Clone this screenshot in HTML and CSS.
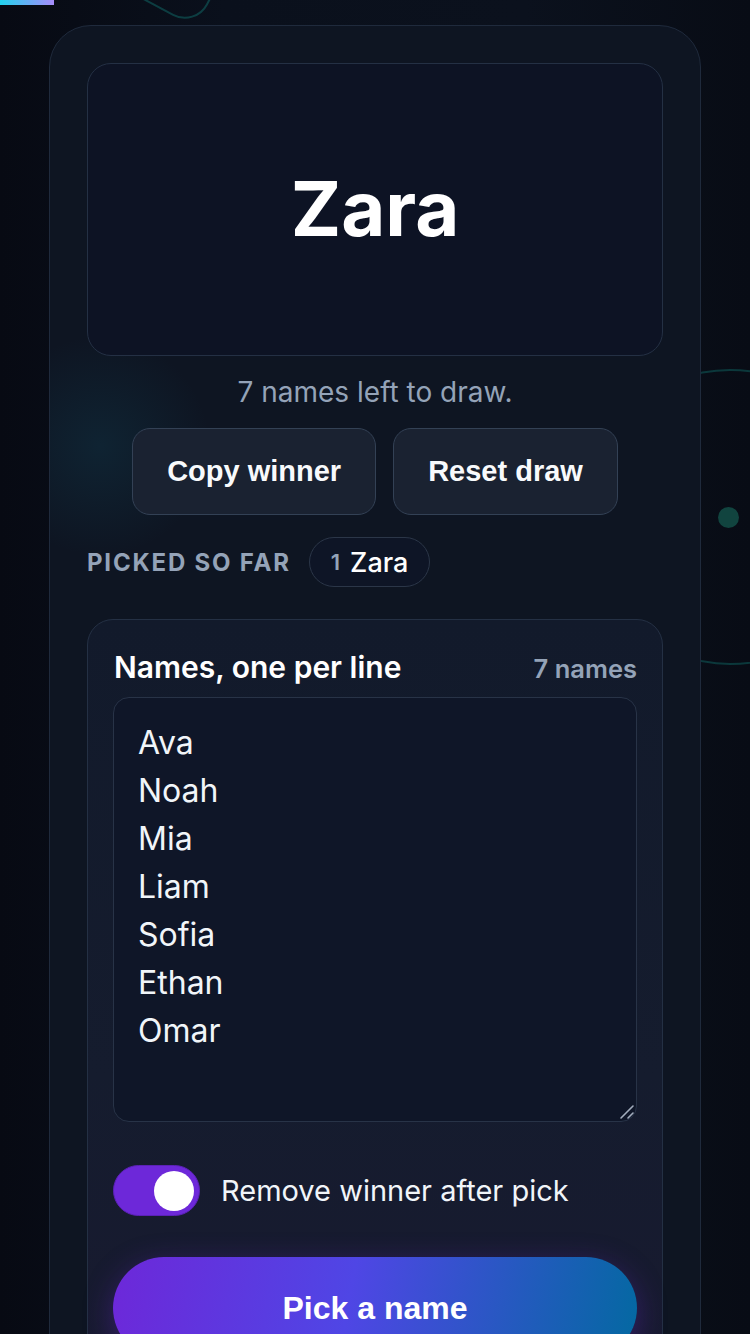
FILE: index.html
```html
<!DOCTYPE html>
<html lang="en">
<head>
<meta charset="utf-8">
<title>Name Picker</title>
<link rel="stylesheet" href="styles.css">
</head>
<body>
<div class="progress"></div>
<div class="deco deco-top"></div>
<div class="deco deco-right"></div>
<div class="deco-dot"></div>
<main class="card">
  <section class="winner-box">
    <div class="winner">Zara</div>
  </section>
  <p class="remaining">7 names left to draw.</p>
  <div class="actions">
    <button class="btn">Copy winner</button>
    <button class="btn">Reset draw</button>
  </div>
  <div class="picked">
    <span class="picked-label">Picked so far</span>
    <span class="chip"><span class="chip-num">1</span><span class="chip-name">Zara</span></span>
  </div>
  <section class="panel">
    <div class="panel-head">
      <span class="panel-title">Names, one per line</span>
      <span class="panel-count">7 names</span>
    </div>
    <div class="names-wrap">
      <textarea class="names" spellcheck="false">Ava
Noah
Mia
Liam
Sofia
Ethan
Omar</textarea>
      <svg class="grip" width="16" height="16" viewBox="0 0 16 16" aria-hidden="true">
        <path d="M2 14 L14 2 M9 14 L14 9" stroke="#a3adbd" stroke-width="1.6" stroke-linecap="round" fill="none"/>
      </svg>
    </div>
    <label class="toggle-row">
      <span class="toggle"><span class="knob"></span></span>
      <span class="toggle-text">Remove winner after pick</span>
    </label>
    <button class="pick">Pick a name</button>
  </section>
</main>
</body>
</html>
```

FILE: styles.css
```css
* { box-sizing: border-box; }
html, body { margin: 0; padding: 0; }
body {
  min-height: 1334px;
  font-family: Inter, "Noto Sans", sans-serif;
  color: #f8fafc;
  background: linear-gradient(90deg, #070a13 0%, #0a101c 30%, #0b111d 70%, #080c15 100%);
  padding: 25px 49px 0;
  overflow: hidden;
  position: relative;
}
.progress {
  position: absolute; left: 0; top: 0;
  width: 54px; height: 5px;
  background: linear-gradient(90deg, #22d3ee, #a78bfa);
  z-index: 3;
}
.deco {
  position: absolute;
  border: 2px solid rgba(20, 150, 140, 0.35);
}
.deco-top {
  width: 90px; height: 90px;
  left: 132px; top: -78px;
  border-radius: 26px;
  transform: rotate(28deg);
}
.deco-right {
  left: 582px; top: 369px;
  width: 296px; height: 296px;
  border-radius: 50%;
  border-color: rgba(20, 150, 140, 0.32);
}
.deco-dot {
  position: absolute;
  left: 718px; top: 507px;
  width: 21px; height: 21px;
  border-radius: 50%;
  background: #11443f;
}
.card {
  position: relative;
  z-index: 1;
  width: 652px;
  border: 1.5px solid #1f2a3c;
  border-radius: 42px;
  background:
    radial-gradient(circle at 50px 420px, rgba(20, 110, 135, 0.16) 0, rgba(20,110,135,0) 110px),
    #0e1522;
  padding: 37px 37px 60px;
  min-height: 1400px;
  display: flex;
  flex-direction: column;
  align-items: stretch;
}
.winner-box {
  height: 293px;
  border: 1.5px solid #243044;
  border-radius: 24px;
  background: #0d1324;
  display: flex;
  align-items: center;
  justify-content: center;
}
.winner {
  font-size: 76px;
  font-weight: 700;
  color: #ffffff;
  margin-top: -4px;
}
.remaining {
  margin: 17px 0 0;
  text-align: center;
  font-size: 28px;
  line-height: 39px;
  color: #94a3b8;
}
.actions {
  margin-top: 16px;
  display: flex;
  justify-content: center;
  gap: 17px;
}
.btn {
  height: 87px;
  padding: 0 34px;
  font-family: "Liberation Sans", Arial, sans-serif;
  font-weight: 700;
  font-size: 29px;
  color: #f8fafc;
  background: #1a2231;
  border: 1.5px solid #334155;
  border-radius: 18px;
}
.picked {
  margin-top: 22px;
  display: flex;
  align-items: center;
  gap: 18px;
}
.picked-label {
  text-transform: uppercase;
  font-size: 24px;
  font-weight: 700;
  letter-spacing: 0.075em;
  color: #94a3b8;
}
.chip {
  height: 50px;
  padding: 0 21px;
  border: 1.5px solid #2b3648;
  border-radius: 25px;
  background: #0e1526;
  display: flex;
  align-items: center;
  gap: 10px;
}
.chip-num { font-size: 22px; font-weight: 600; color: #94a3b8; }
.chip-name { font-size: 27px; font-weight: 500; color: #ffffff; }
.panel {
  margin-top: 32px;
  border: 1.5px solid #243044;
  border-radius: 26px;
  background: linear-gradient(180deg, #121a2b 0%, #151c2e 60%, #181a30 100%);
  padding: 28px 25px 0;
  display: flex;
  flex-direction: column;
  height: 760px;
}
.panel-head {
  display: flex;
  justify-content: space-between;
  align-items: baseline;
  padding: 0 0 0 1px;
}
.panel-title { font-size: 30px; font-weight: 600; line-height: 38px; color: #ffffff; }
.panel-count { font-size: 25.5px; font-weight: 600; color: #94a3b8; }
.names-wrap {
  position: relative;
  margin-top: 11px;
}
.names {
  display: block;
  height: 425px;
  width: 100%;
  resize: none;
  font-family: Inter, "Noto Sans", sans-serif;
  font-size: 32px;
  line-height: 48px;
  color: #f1f5f9;
  background: #0f1628;
  border: 1.5px solid #283347;
  border-radius: 16px;
  padding: 21px 24px;
  outline: none;
  overflow: hidden;
}
.grip {
  position: absolute;
  right: 2px;
  bottom: 2px;
}
.toggle-row {
  margin-top: 43px;
  display: flex;
  align-items: center;
  gap: 21px;
}
.toggle {
  width: 87px; height: 51px;
  border-radius: 26px;
  background: #6d28d9;
  border: 1.5px solid #5b21b6;
  display: flex;
  align-items: center;
  justify-content: flex-end;
  padding-right: 5px;
}
.knob {
  width: 40px; height: 40px;
  border-radius: 50%;
  background: #ffffff;
}
.toggle-text { font-size: 29px; color: #f1f5f9; }
.pick {
  margin-top: 41px;
  height: 102px;
  width: 100%;
  border: none;
  border-radius: 51px;
  background: linear-gradient(100deg, #6d28d9 0%, #4f46e5 45%, #0369a1 100%);
  box-shadow: 0 8px 30px rgba(109, 40, 217, 0.35);
  font-family: "Liberation Sans", Arial, sans-serif;
  font-weight: 700;
  font-size: 32px;
  color: #ffffff;
}
```
